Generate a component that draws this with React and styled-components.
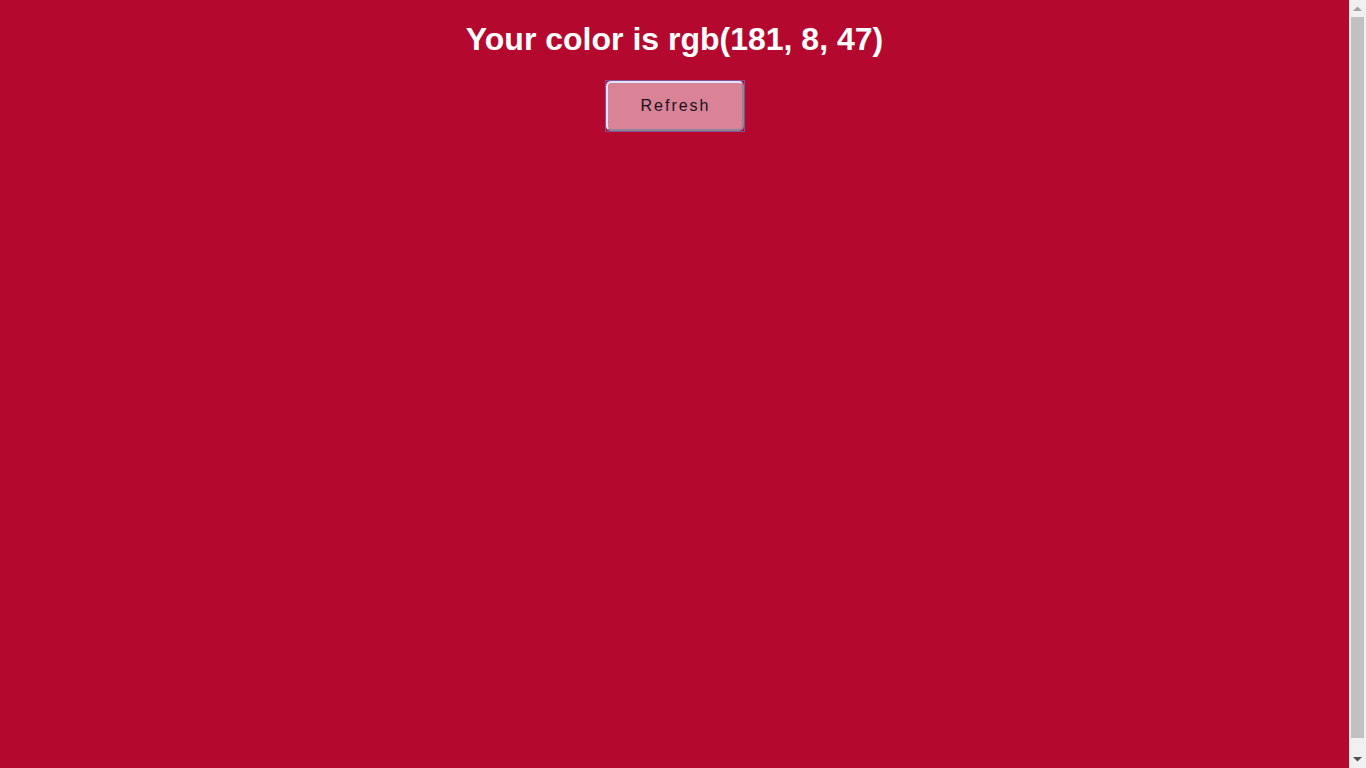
import React from "react";
import styled, { createGlobalStyle } from "styled-components";

const Global = createGlobalStyle`
  html { background: rgb(181, 8, 47); }
  body {
    margin: 0;
    font-family: "Liberation Sans", Arial, sans-serif;
  }
`;

const Page = styled.main`
  min-height: 100vh;
  padding-right: 17px;
  display: flex;
  flex-direction: column;
  align-items: center;
`;

const Title = styled.h1`
  margin: 21.44px 0;
  font-size: 32px;
  line-height: 37px;
  font-weight: 700;
  color: #fff;
  text-align: center;
`;

const Button = styled.button`
  width: 140px;
  height: 52px;
  padding: 0;
  margin: 0;
  border: 1px solid #85509c;
  background: transparent;
  display: flex;
  cursor: pointer;
`;

const Face = styled.span`
  flex: 1;
  display: flex;
  align-items: center;
  justify-content: center;
  border-radius: 5px;
  border: 2px solid;
  border-color: #dfe4fb #8e8794 #8e8794 #dfe4fb;
  background: rgb(218, 131, 151);
  color: #16121c;
  font-family: "Liberation Sans", Arial, sans-serif;
  font-size: 16px;
  letter-spacing: 2px;
  padding-left: 2px;
`;

/* imitation of the browser's classic vertical scrollbar, laid over the page edge */
const ScrollBar = styled.div`
  position: fixed;
  top: 0;
  right: 0;
  width: 17px;
  height: 100vh;
  background: #f0f0f0;
  display: flex;
  flex-direction: column;
`;

const Arrow = styled.div`
  height: 17px;
  flex: none;
  display: flex;
  align-items: center;
  justify-content: center;
`;

const Track = styled.div`
  flex: 1;
  padding: 0 2px 13px;
  display: flex;
`;

const Thumb = styled.div`
  flex: 1;
  background: #c1c1c1;
`;

export default function App() {
  return (
    <>
      <Global />
      <Page>
        <Title>Your color is rgb(181, 8, 47)</Title>
        <Button>
          <Face>Refresh</Face>
        </Button>
      </Page>
      <ScrollBar>
        <Arrow>
          <svg width="9" height="5" viewBox="0 0 9 5">
            <path d="M0 5 L4.5 0.5 L9 5 Z" fill="#a3a3a3" />
          </svg>
        </Arrow>
        <Track>
          <Thumb />
        </Track>
        <Arrow>
          <svg width="9" height="5" viewBox="0 0 9 5">
            <path d="M0 0 L4.5 4.5 L9 0 Z" fill="#505050" />
          </svg>
        </Arrow>
      </ScrollBar>
    </>
  );
}
